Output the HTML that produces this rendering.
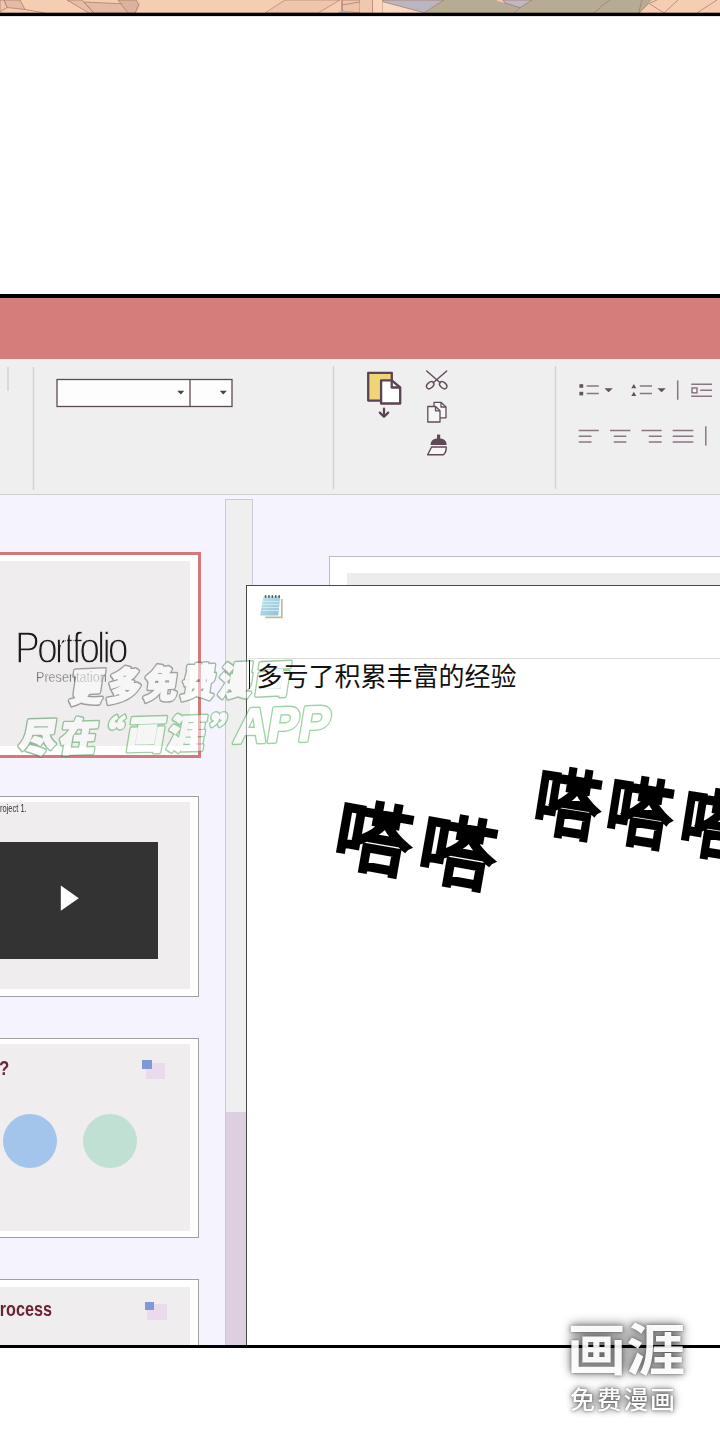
<!DOCTYPE html>
<html lang="zh">
<head>
<meta charset="utf-8">
<title>page</title>
<style>
html,body{margin:0;padding:0;}
body{width:720px;height:1440px;position:relative;overflow:hidden;background:#fff;font-family:"Liberation Sans","Noto Sans CJK SC",sans-serif;}
.a{position:absolute;}
#topstrip{left:0;top:0;width:720px;height:17px;}
#panel{left:0;top:294px;width:720px;height:1054px;background:#f5f3fe;overflow:hidden;}
#titlebar{left:0;top:4px;width:720px;height:61px;background:#d47d7b;}
#ribbon{left:0;top:64.5px;width:720px;height:135px;background:#efefef;border-bottom:1.5px solid #cfcfcf;}
.vsep{background:#d0d0d0;width:1.5px;}
#combo{left:57px;top:85px;width:174px;height:26px;background:#fdfdfd;border:1.3px solid #5e4a57;box-sizing:content-box;}
.slide{background:#fff;border:1.8px solid #a0a0a0;box-sizing:border-box;}
.slidein{background:#efeded;}
#notepad{left:246.5px;top:291.5px;width:480px;height:770px;background:#fff;border:1.5px solid #4a4a4a;box-sizing:border-box;}
.da{font-family:"Noto Sans CJK SC","WenQuanYi Zen Hei",sans-serif;font-weight:100;color:#000;line-height:1;white-space:nowrap;-webkit-text-stroke:6.3px #000;transform-origin:50% 50%;}
</style>
</head>
<body>
<!-- previous comic panel strip -->
<svg id="topstrip" class="a" width="720" height="17" viewBox="0 0 720 17">
<rect width="720" height="14" fill="#f5ceb2"/>
<g stroke="#a87468" stroke-width="0.7" stroke-linejoin="round">
<polygon points="4,0 20,0 25,9.5 7,7.5" fill="#e3bba2"/>
<polygon points="0,0 4,0 7,7.5 0,12" fill="#efc5aa"/>
<path d="M25,9.5 L45,13" fill="none"/>
<polygon points="67,0 82,0 94,13 89,13" fill="#e6bea5"/>
<polygon points="95,2.5 139,4.5 135,13 94,13 84,2" fill="#e3bba2"/>
<polygon points="118,0 136,0 139,4.5 135,13 128,13" fill="#dcb29b"/>
<polygon points="285,0 340,0 318,13 265,13" fill="#efc6ab" stroke-width="0.6"/>
<polygon points="342,0 360,0 360,13 342,11" fill="#eec3a8"/>
<path d="M342,0 V11 M342,5 L360,2" fill="none"/>
<polygon points="340,11 348,11.2 350,13 338,13" fill="#b5b0bd" stroke="none"/>
<rect x="360" y="0" width="12.5" height="13" fill="#f0c8ad" stroke="none"/>
<rect x="372.5" y="0" width="10.5" height="13" fill="#f8d6bd" stroke="none"/>
<path d="M372.5,0 V13 M383,0 V13" fill="none"/>
<polygon points="383,1.7 424,12.8 383,13" fill="#f9d9c0" stroke="none"/>
<polygon points="444,0 660,0 640,13 424,13" fill="#b6ac94" stroke="none"/>
<polygon points="383,0 444,0 424,12.8 383,1.7" fill="#b9b5c1"/>
<polygon points="496,0 503,0 505,3 500,2" fill="#f3c6a8" stroke="none"/>
<polygon points="503,0 532,0 520,7.7 505,3" fill="#bcb8c4"/>
<path d="M520,7.7 L514,13 M600,8 L593,13 M610,0 L600,7" fill="none"/>
<polygon points="652,0 720,0 720,13 639,13 648,4" fill="#f5ceb2" stroke="none"/>
<path d="M657,0 L648,4 L639,13 M642,0 L638.5,13 M650,4 L664,13 M678,0 L664,13 M717,0 L697,13" fill="none"/>
</g>
<rect y="12.7" width="720" height="3.4" fill="#000"/>
</svg>

<div id="panel" class="a">
  <div id="titlebar" class="a"></div>
  <div id="ribbon" class="a"></div>
</div>


<!-- ribbon icons -->
<svg class="a" style="left:0;top:358px;" width="720" height="140" viewBox="0 358 720 140">
<g fill="none" stroke="#d2d2d2" stroke-width="1.5">
<line x1="8" y1="367" x2="8" y2="391"/>
<line x1="33.5" y1="367" x2="33.5" y2="490"/>
<line x1="333.5" y1="366" x2="333.5" y2="489"/>
<line x1="555.5" y1="366" x2="555.5" y2="489"/>
</g>
<!-- combo boxes -->
<rect x="57" y="379.5" width="175" height="27" fill="#fdfdfd" stroke="#5e4a57" stroke-width="1.3"/>
<line x1="190" y1="379.5" x2="190" y2="406.5" stroke="#5e4a57" stroke-width="1.3"/>
<polygon points="177.3,390.8 184.3,390.8 180.8,394.6" fill="#4f3d49"/>
<polygon points="219.8,390.8 226.8,390.8 223.3,394.6" fill="#4f3d49"/>
<!-- paste -->
<rect x="368.2" y="372.8" width="23.6" height="27.8" fill="#f0d578" stroke="#5a4352" stroke-width="2.3" stroke-linejoin="round"/>
<path d="M381.1 380.3 H391.7 L400.2 387.5 V403.5 H381.1 Z" fill="#fff" stroke="#5a4352" stroke-width="2.3" stroke-linejoin="round"/>
<path d="M391.7 380.3 V387.5 H400.2" fill="none" stroke="#5a4352" stroke-width="2.3" stroke-linejoin="round"/>
<path d="M384 408.6 V416.5 M379.8 412.6 L384 416.8 L388.2 412.6" fill="none" stroke="#5a4352" stroke-width="2.2" stroke-linecap="round" stroke-linejoin="round"/>
<!-- scissors -->
<g fill="none" stroke="#604c59" stroke-width="1.4" stroke-linecap="round">
<path d="M426.7 371 L440.2 382.8"/>
<path d="M446.7 371 L433.2 382.8"/>
<ellipse cx="430.2" cy="385.2" rx="4.2" ry="2.8" transform="rotate(-42 430.2 385.2)"/>
<ellipse cx="443.2" cy="385.2" rx="4.2" ry="2.8" transform="rotate(42 443.2 385.2)"/>
</g>
<!-- copy -->
<g fill="#f6f6f6" stroke="#604c59" stroke-width="1.3" stroke-linejoin="round">
<path d="M434 402.3 H441 L446 407 V417.8 H434 Z"/>
<path d="M441 402.3 V407 H446" fill="none"/>
<path d="M427.8 406.5 H435.5 L440 410.8 V422 H427.8 Z"/>
<path d="M435.5 406.5 V410.8 H440" fill="none"/>
</g>
<!-- format painter -->
<g fill="#5e4a57" stroke="none">
<rect x="437" y="434.6" width="3.2" height="5"/>
<path d="M430.6 445 C430.6 440.5 433.5 438.6 438.6 438.6 C443.7 438.6 446.6 440.5 446.6 445 Z"/>
</g>
<path d="M431.6 447 H446.2 C446.4 451 445.2 453.6 443.2 454.8 H427.6 Z" fill="#f6f6f6" stroke="#5e4a57" stroke-width="1.4" stroke-linejoin="round"/>
<!-- bullet list -->
<g fill="#66525e">
<rect x="579.4" y="384.2" width="3.8" height="3.6"/>
<rect x="579.4" y="391.8" width="3.8" height="3.6"/>
<polygon points="604.4,388.3 612.8,388.3 608.6,392.2"/>
<polygon points="631.3,388.2 636.3,388.2 633.8,384"/>
<polygon points="631.3,396 636.3,396 633.8,391.8"/>
<polygon points="657.4,388.3 665.8,388.3 661.6,392.2"/>
</g>
<g fill="none" stroke="#8a7682" stroke-width="1.5">
<path d="M586.7 386 H598.8 M586.7 393.6 H598.8"/>
<path d="M639.8 386 H652 M639.8 393.6 H652"/>
<path d="M677.7 380.4 V399.8"/>
<path d="M691.2 384.3 H712 M700.2 390.3 H712 M691.2 396.2 H712"/>
<rect x="692" y="388" width="5" height="4.8" fill="#f6f6f6"/>
<!-- align -->
<path d="M578.8 430.5 H598.8 M578.8 436.3 H591.5 M578.8 442 H591.5"/>
<path d="M610 430.5 H630.4 M613.8 436.3 H626.3 M613.8 442 H626.3"/>
<path d="M641.5 430.5 H661.7 M648.8 436.3 H661.7 M648.8 442 H661.7"/>
<path d="M672.7 430.5 H693.3 M672.7 436.3 H693.3 M672.7 442 H693.3"/>
<path d="M705.8 426.3 V445.4"/>
</g>
</svg>

<!-- left panel: slides (page coords) -->
<div class="a" style="left:-20px;top:552.3px;width:221.3px;height:206px;background:#fff;border:3.6px solid #d5787a;box-sizing:border-box;"></div>
<div class="a slidein" style="left:-20px;top:561px;width:210.3px;height:184.6px;"></div>
<div id="pf" class="a" style="left:15.2px;top:623.6px;font-size:44.5px;line-height:48px;color:#1c1c1c;transform-origin:0 0;transform:scaleX(0.84);white-space:nowrap;-webkit-text-stroke:1.35px #efeded;letter-spacing:-3.5px;">Portfolio</div>
<div id="pr" class="a" style="left:36.3px;top:666.5px;font-size:15px;line-height:20px;color:#444;transform-origin:0 0;transform:scaleX(0.84);white-space:nowrap;-webkit-text-stroke:0.5px #efeded;">Presentation</div>

<div class="a slide" style="left:-20px;top:796.2px;width:219.3px;height:200.6px;"></div>
<div class="a slidein" style="left:-20px;top:801.5px;width:210.3px;height:187.3px;"></div>
<div id="pj" class="a" style="left:-5.5px;top:802.8px;font-size:10px;line-height:12px;color:#3a3035;transform-origin:0 0;transform:scaleX(0.75);white-space:nowrap;">Project 1.</div>
<div class="a" style="left:-20px;top:842px;width:177.8px;height:117px;background:#333;"></div>
<svg class="a" style="left:58px;top:882px;" width="24" height="32" viewBox="58 882 24 32"><polygon points="60.8,885.6 78.8,898.2 60.8,910.8" fill="#fff"/></svg>

<div class="a slide" style="left:-20px;top:1037.6px;width:219.3px;height:200.4px;"></div>
<div class="a slidein" style="left:-20px;top:1043.5px;width:210.3px;height:187px;"></div>
<div class="a" style="left:-1.5px;top:1055px;font-size:21px;line-height:26px;font-weight:bold;color:#6b2335;transform-origin:0 0;transform:scaleX(0.8);">?</div>
<div class="a" style="left:2.8px;top:1114px;width:54px;height:54px;border-radius:50%;background:#a3c5eb;"></div>
<div class="a" style="left:83px;top:1114px;width:54px;height:54px;border-radius:50%;background:#bfe0d3;"></div>
<div class="a" style="left:145.5px;top:1063.3px;width:19.5px;height:15.6px;background:#eadaee;"></div>
<div class="a" style="left:142px;top:1060.4px;width:9.7px;height:9.1px;background:#7f98d6;"></div>

<div class="a slide" style="left:-20px;top:1278.5px;width:219.3px;height:200px;"></div>
<div class="a slidein" style="left:-20px;top:1286.8px;width:209.8px;height:187px;"></div>
<div class="a" style="left:-11.2px;top:1296.5px;font-size:20.5px;line-height:24px;font-weight:bold;color:#6b2335;transform-origin:0 0;transform:scaleX(0.79);white-space:nowrap;">Process</div>
<div class="a" style="left:147.3px;top:1304.2px;width:19.5px;height:15.6px;background:#eadaee;"></div>
<div class="a" style="left:144.5px;top:1301.6px;width:9.7px;height:8.8px;background:#7f98d6;"></div>

<!-- scrollbar -->
<div class="a" style="left:224.6px;top:498.5px;width:28px;height:900px;background:#efefef;border:1.3px solid #cfc6d6;box-sizing:border-box;"></div>
<div class="a" style="left:225.8px;top:1112px;width:25.6px;height:260px;background:#dccfdf;"></div>

<!-- main slide area -->
<div class="a" style="left:328.5px;top:556px;width:420px;height:200px;background:#fff;border:1.2px solid #bdbdbd;box-sizing:border-box;"></div>
<div class="a" style="left:347px;top:573.3px;width:400px;height:100px;background:#ececec;"></div>

<!-- notepad window -->
<div id="notepad" class="a" style="left:246.2px;top:585.2px;width:500px;height:800px;"></div>
<div class="a" style="left:249px;top:658px;width:480px;height:1.2px;background:#dcdcdc;"></div>

<!-- notepad icon -->
<svg class="a" style="left:258px;top:592px;" width="28" height="29" viewBox="258 592 28 29">
<defs><linearGradient id="npg" x1="0" y1="0" x2="1" y2="1"><stop offset="0" stop-color="#c4e6f0"/><stop offset="1" stop-color="#8cc0d6"/></linearGradient></defs>
<polygon points="264.5,599 282.6,599 282.6,618.3 265.5,618.3" fill="#b9b8a6"/>
<polygon points="264,597.5 281,597.5 281,616.5 265,616.5" fill="#fbfbf4"/>
<polygon points="263.5,596.5 280.2,596.5 278.2,615.4 260.2,615.4" fill="url(#npg)"/>
<g stroke="#d7eef5" stroke-width="0.8"><path d="M263 601.5 H279.5 M262.6 604.5 H279.2 M262.2 607.5 H278.9 M261.8 610.5 H278.6"/></g>
<g fill="#46525e"><rect x="264.8" y="595.2" width="1.5" height="2.6"/><rect x="268.2" y="595.2" width="1.5" height="2.6"/><rect x="271.6" y="595.2" width="1.5" height="2.6"/><rect x="275" y="595.2" width="1.5" height="2.6"/><rect x="278.4" y="595.2" width="1.5" height="2.6"/></g>
</svg>

<!-- sound effects -->
<div class="a da" id="d1" style="left:339.8px;top:799.7px;font-size:68px;transform:rotate(10deg) scale(1.09,1.10);">嗒</div>
<div class="a da" id="d2" style="left:424px;top:814.3px;font-size:68px;transform:rotate(10deg) scale(1.09,1.10);">嗒</div>
<div class="a da" id="d3" style="left:535.5px;top:767.2px;font-size:64px;transform:rotate(9deg) scale(0.99,1.13);">嗒</div>
<div class="a da" id="d4" style="left:608.3px;top:776.4px;font-size:64px;transform:rotate(9deg) scale(0.99,1.13);">嗒</div>
<div class="a da" id="d5" style="left:681.7px;top:788px;font-size:64px;transform:rotate(9deg) scale(0.99,1.13);">嗒</div>

<!-- centre watermark -->
<svg id="wm" class="a" style="left:0;top:640px;" width="360" height="130" viewBox="0 640 360 130">
<defs>
<linearGradient id="wg1" gradientUnits="userSpaceOnUse" x1="0" y1="0" x2="224" y2="0"><stop offset="0" stop-color="#4e4e4e"/><stop offset="0.4" stop-color="#505a52"/><stop offset="0.75" stop-color="#4a9256"/><stop offset="1" stop-color="#3ca447"/></linearGradient>
<linearGradient id="wg2" gradientUnits="userSpaceOnUse" x1="0" y1="0" x2="320" y2="0"><stop offset="0" stop-color="#3f8049"/><stop offset="0.3" stop-color="#3ca447"/><stop offset="1" stop-color="#44b050"/></linearGradient>
</defs>
<g opacity="0.5" style="font-family:'Noto Sans CJK SC','WenQuanYi Zen Hei',sans-serif;font-weight:900;" stroke-linejoin="round">
<g fill="none" stroke-width="4.2">
<g stroke="url(#wg1)"><text id="wm1" font-size="33.5" transform="translate(68.5 701.8) rotate(-2.5) skewX(-11) scale(1 1.13)" x="0 37.2 74.4 111.6 148.8 186">更多免费漫画</text></g>
<g stroke="url(#wg2)"><text id="wm2" font-size="37" transform="translate(17.5 752.6) rotate(-1.6) skewX(-11) scale(1 1.06)" x="0 40.5 66 108 148.5 189 214.5 247.5 279"><tspan>尽在“画涯”</tspan><tspan style="font-family:'Liberation Sans',sans-serif;font-weight:bold;font-size:46px" dy="-3.5">APP</tspan></text></g>
</g>
<g fill="#ffffff" stroke="#ffffff" stroke-width="1.5">
<use href="#wm1"/>
<use href="#wm2"/>
</g>
</g>
</svg>
<!-- notepad text (above watermark) -->
<div class="a" style="left:248.6px;top:660px;width:1.7px;height:29px;background:#111;"></div>
<div id="memo" class="a" style="left:256.4px;top:657.8px;font-family:'Liberation Sans','Noto Sans CJK SC',sans-serif;font-size:26px;line-height:38px;color:#111;white-space:nowrap;letter-spacing:0;">多亏了积累丰富的经验</div>
<div class="a" style="left:0;top:294px;width:720px;height:4px;background:#000;"></div>
<div class="a" style="left:0;top:1344.5px;width:720px;height:3.5px;background:#000;"></div>

<div class="a" style="left:0;top:1348px;width:720px;height:92px;background:#fff;"></div>
<!-- corner watermark -->
<div class="a" style="left:572px;top:1324px;width:110px;height:48px;background:rgba(0,0,0,0.26);filter:blur(6px);"></div>
<div class="a" style="left:576px;top:1391px;width:98px;height:16px;background:rgba(0,0,0,0.2);filter:blur(5px);"></div>
<div id="logo1" class="a" style="left:566.6px;top:1313.5px;opacity:0.9;font-family:'Noto Sans CJK SC','WenQuanYi Zen Hei',sans-serif;font-weight:700;font-size:58px;line-height:64px;color:#fff;white-space:nowrap;letter-spacing:0px;transform-origin:0 50%;transform:scale(1.02,0.97);text-shadow:0 0 2px rgba(0,0,0,.36),0 0 5px rgba(0,0,0,.32),0 0 9px rgba(0,0,0,.26),0 0 14px rgba(0,0,0,.2);">画涯</div>
<div id="logo2" class="a" style="left:570px;top:1381px;opacity:0.95;font-family:'Noto Sans CJK SC','WenQuanYi Zen Hei',sans-serif;font-weight:500;font-size:25px;line-height:34px;color:#fff;white-space:nowrap;letter-spacing:1.7px;text-shadow:0 0 2px rgba(0,0,0,.42),0 0 4px rgba(0,0,0,.36),0 0 8px rgba(0,0,0,.28),0 0 12px rgba(0,0,0,.2);">免费漫画</div>
</body>
</html>
